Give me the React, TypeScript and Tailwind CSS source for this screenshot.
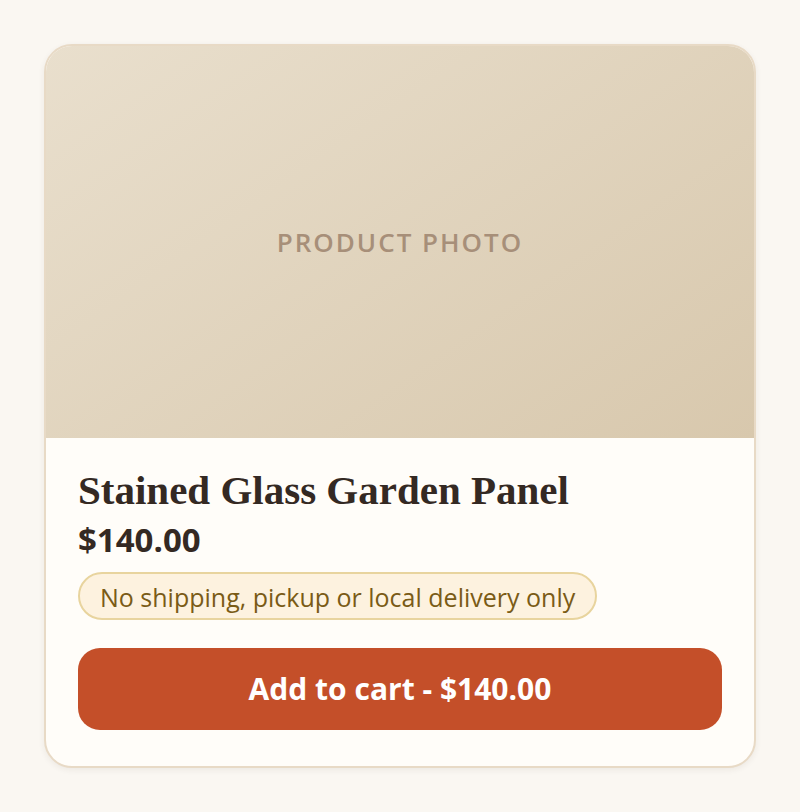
export default function App() {
  return (
    <main className="min-h-screen bg-[#faf7f2] p-11 font-['Open_Sans',sans-serif] text-[#342923]">
      <article className="overflow-hidden rounded-[28px] border-2 border-[#e8dac6] bg-[#fffdf9] shadow-[0_2px_6px_rgba(52,41,35,0.07)]">
        <div className="flex h-98 items-center justify-center bg-linear-[145deg,#e9dfcd,#d8c8ad]">
          <span className="text-[26px] font-semibold tracking-[2px] text-[#a78f79]">PRODUCT PHOTO</span>
        </div>
        <div className="px-8 pt-8 pb-9">
          <h2 className="font-['Liberation_Serif',serif] text-[41px] leading-10 font-bold">Stained Glass Garden Panel</h2>
          <p className="mt-2 text-[33px] leading-11 font-bold">$140.00</p>
          <p className="mt-2.5 flex min-h-12 w-fit items-center rounded-full border-2 border-[#e8d49e] bg-[#fdf2df] px-5 pt-0.5 text-[25px] leading-10 text-[#7a5b16]">No shipping, pickup or local delivery only</p>
          <button type="button" className="mt-7 block w-full rounded-[22px] bg-[#c44f29] py-5 text-[30px] leading-[42px] font-bold text-white">Add to cart - $140.00</button>
        </div>
      </article>
    </main>
  );
}
